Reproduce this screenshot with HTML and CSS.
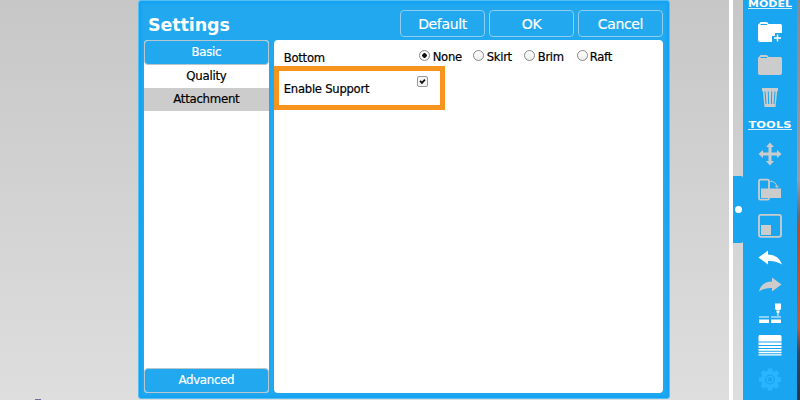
FILE: index.html
```html
<!DOCTYPE html>
<html lang="en"><head><meta charset="utf-8"><title>Settings</title><link rel="stylesheet" href="styles.css"></head>
<body>
<div class="app">
<main class="stage">
<section class="dialog">
<header class="head"><h1>Settings</h1><div class="actions"><button>Default</button><button>OK</button><button>Cancel</button></div></header>
<div class="body">
<nav class="side"><button class="tab">Basic</button><div class="item">Quality</div><div class="item active">Attachment</div><button class="tab last">Advanced</button></nav>
<div class="content">
<div class="row"><span class="label bottom-label">Bottom</span><div class="options">
<label class="none"><i class="radio on"></i><span>None</span></label><label class="skirt"><i class="radio"></i><span>Skirt</span></label><label class="brim"><i class="radio"></i><span>Brim</span></label><label><i class="radio"></i><span>Raft</span></label></div></div>
<div class="support"><span class="label enable-label">Enable Support</span><i class="check"><svg viewBox="0 0 11 11"><path d="M2.500 4.800 4.800 7.200 8.500 3.300" fill="none" stroke="#111" stroke-width="2.200"/></svg></i></div>
</div></div>
</section>
<i class="speck"></i>
</main>
<div class="gutter"><div class="handle"><i></i></div></div>
<aside class="rail">
<svg width="54" height="400" viewBox="743 0 54 400">
<g class="heading"><text x="748" y="6.500" textLength="44" lengthAdjust="spacingAndGlyphs">MODEL</text><text x="748.500" y="127.500" textLength="43" lengthAdjust="spacingAndGlyphs">TOOLS</text></g>
<path d="M748 8.500h44M748 129.500h44" stroke="#fff" stroke-opacity=".8"/>
<path fill="#fff" d="M758 25.500q0-1.500 1.500-2l1-1.500h5.500q2 0 2.500 2h12q1.500 0 1.500 1.500V33h-7v3h-3v6h-12q-2 0-2-2z"/>
<path d="M760.500 24.500h6.500" stroke="#1aa5f1"/>
<path d="M777.500 34.500v7M774 38h7" stroke="#fff" stroke-width="1.500"/>
<path fill="#ccc" d="M758 58.500q0-1.500 1.500-2l1-1.500h5.500q2 0 2.500 2h12q1.500 0 1.500 1.500V73q0 2-2 2h-20q-2 0-2-2z"/>
<path d="M760.500 57.500h6.500" stroke="#1aa5f1"/>
<path fill="#ccc" d="M762 88h16v3h-.8l-1.700 16h-11L762.800 91h-.8z"/>
<path d="M765 91.500l1 12.500M768.300 91.500l.3 12.500M771.700 91.500l-.3 12.500M775 91.500l-1 12.500" stroke="#1aa5f1"/>
<path fill="#ccc" d="M770 142.500l4 4.500h-2.500v5.500h5.500v-2.500l4.500 4-4.500 4v-2.500h-5.500v5.500h2.500l-4 4.500-4-4.500h2.500v-5.500H763v2.500l-4.500-4 4.500-4v2.500h5.500V147H766z"/>
<g fill="none" stroke="#ccc" stroke-width="1.800"><rect x="759" y="179.700" width="10" height="20" rx="1.500"/><path d="M770 181.200q6 0 7 6m-2-1.500 2 2 1.500-2" stroke-width="1"/><rect x="759" y="214.800" width="22" height="22" rx="2"/></g>
<rect x="761" y="188.500" width="20" height="9.500" fill="#ccc"/><rect x="761" y="225" width="10" height="10" fill="#ccc"/>
<path fill="#fff" d="M758.500 257.500l9.500-7v4q11 .5 14 10-6-4-14-3.500v3.500z"/>
<path fill="#ccc" d="M781.500 284.500l-9.500-7v4q-11 .5-13 10 6-4 13-3.500v3.500z"/>
<path fill="#fff" d="M775 303.500h6v5.500l-1.500 1.500h-3l-1.500-1.500zM776.500 311h3v1.500l-1 1v3h-1v-3l-1-1zM759 319.500h10v3.500h-10zM771 319.500h10v3.500h-10z"/>
<path d="M759 317h10M771 317h10" stroke="#8bd0f9" stroke-width="2"/>
<path fill="#fff" d="M759.500 335h21l1 1v5.500h-23v-5.500zM758.500 342.500h23v2.500h-23zM758.500 346h23v2h-23zM758.500 349h23v1.700h-23zM758.500 351.700h23v1.500h-23zM758.500 354.200h23v1.300h-23z"/>
<g fill="none" stroke="#29b6ff"><circle cx="770" cy="379.500" r="7" stroke-width="4"/><circle cx="770" cy="379.500" r="3" stroke-width="1.500"/><path stroke-width="4.500" d="M770 368.500v3M770 387.500v3M759 379.500h3M778 379.500h3M762.200 371.700l2 2M775.800 385.300l2 2M777.800 371.700l-2 2M764.200 385.300l-2 2"/></g>
</svg>
</aside><div class="desktop"></div>
</div>
</body></html>
```
FILE: styles.css
```css
*{box-sizing:border-box}
body{margin:0;font:12px "DejaVu Sans",sans-serif;color:#000;overflow:hidden}
.app{display:flex;width:800px;height:400px;background:linear-gradient(#c7c7c7,#dedede)}
.stage{position:relative;width:729px;padding-left:138px}
.dialog{width:532px;height:399px;padding:0 6px;background:#21a8ef;border:1px solid #55bff5;border-radius:3px;box-shadow:inset 0 0 3px 2px #12a3f3}
.head{display:flex;justify-content:space-between;height:39px;padding-left:3px}
h1{margin:13px 0 0;font-size:17.500px;line-height:23px;letter-spacing:-.1px;color:#fff}
.actions{display:flex;gap:4px;padding-top:9px}
button{font:14px "DejaVu Sans",sans-serif;letter-spacing:-.35px;color:#fff;background:#21a8ef;border:1px solid #8ecdef;border-radius:4px;padding:0;-webkit-text-stroke:.2px}
.actions button{width:85px;height:27px}
.body{display:flex;gap:5px;height:353px;margin-left:-1px}
.side{display:flex;flex-direction:column;width:125px;background:#fff;border-radius:4px}
.side .tab{height:25px;font-size:11.800px;letter-spacing:-.3px;padding-bottom:2px;border-color:#b8c6ce}
.side .last{margin-top:auto}
.item{height:23px;line-height:23px;text-align:center;font-size:11.800px;letter-spacing:-.3px;-webkit-text-stroke:.2px}
.active{background:#ccc}
.content{width:390px;background:#fff;border-radius:4px}
.row{display:flex;height:26px;padding:9px 0 0 10px}
.label{font-size:11.600px;letter-spacing:-.25px;line-height:19px;-webkit-text-stroke:.2px}
.bottom-label{width:135px}
.options{display:flex;font-size:11.600px;letter-spacing:-.3px;line-height:16px;-webkit-text-stroke:.2px}
label{display:flex;width:52px;gap:2px;height:16px}
.none{width:54px;gap:3px}
.skirt{width:51px;gap:3px}
.brim{width:53px;gap:3px}
.radio{width:11px;height:11px;margin-top:1px;border:1px solid #888;border-radius:50%;background:linear-gradient(#fff,#eee)}
.radio.on{background:radial-gradient(circle,#111 0 2px,#fff 2.500px)}
.support{display:flex;width:171px;height:44px;padding:4px 0 0 5px;border:5px solid #f7941e}
.enable-label{width:133px;margin-top:5px}
.check{width:11px;height:11px;margin-top:1px;border:1px solid #999;border-radius:2px;background:#f4f4f4}
.check svg{display:block;width:9px;height:9px}
.speck{position:absolute;left:35px;top:399px;width:6px;height:1px;background:#746b99}
.gutter{width:14px;padding-top:176px;border-left:4px solid #fff}
.handle{display:flex;align-items:center;justify-content:center;width:10px;height:67px;background:#1aa5f1;border-radius:0 2px 2px 0}
.handle i{width:7px;height:7px;border-radius:50%;background:#fff}
.rail{width:54px;background:#1aa5f1}
.rail svg{display:block}
.heading{font:bold 8.800px "DejaVu Sans",sans-serif;fill:#fff}
.desktop{width:3px;background:linear-gradient(#858994,#9a9ba5 45%,#69686f 54%,#b94b28 57%,#c45935 82%,#35445e 88%,#25354f)}
```
